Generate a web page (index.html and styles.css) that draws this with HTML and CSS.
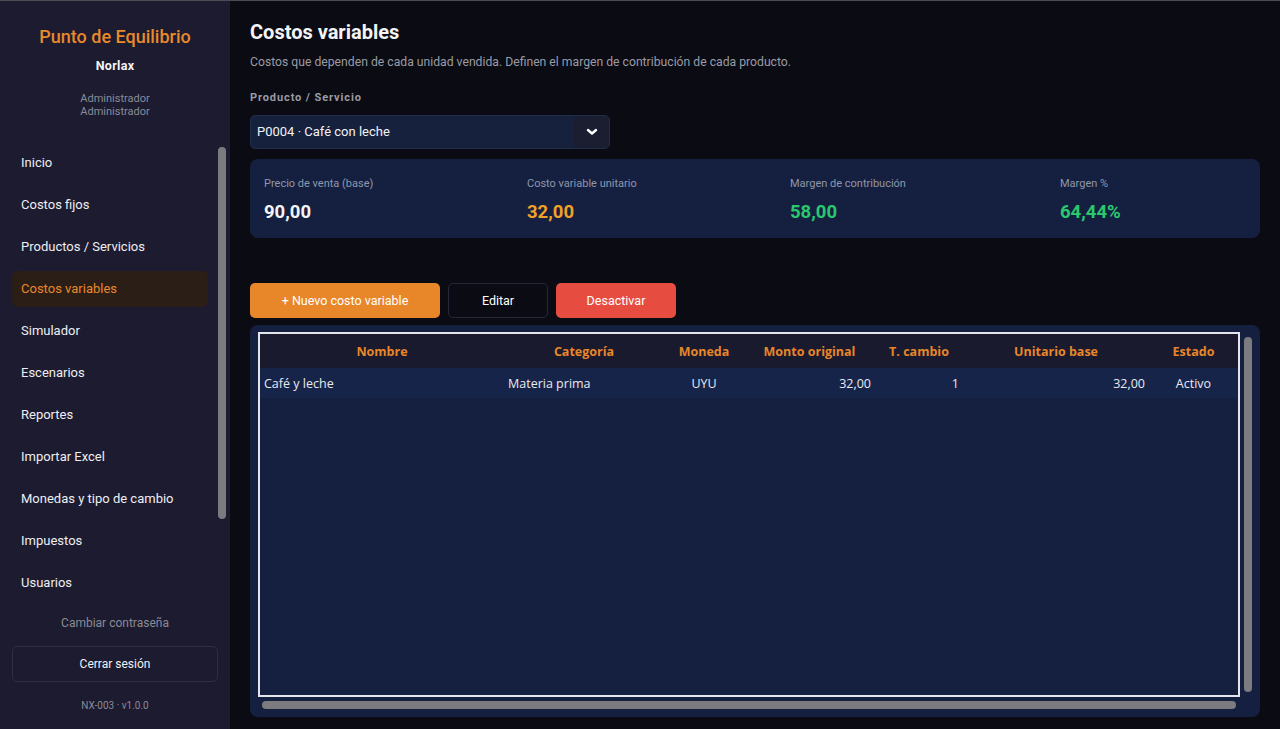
FILE: index.html
```html
<!DOCTYPE html>
<html lang="es">
<head>
  <meta charset="UTF-8">
  <meta name="viewport" content="width=device-width, initial-scale=1.0">
  <title>Costos variables</title>
  <link rel="stylesheet" href="styles.css">
</head>
<body>

<div class="app">
  <aside class="sidebar">
    <div class="brand">
      <div class="brand-title">Punto de Equilibrio</div>
      <div class="brand-company">Norlax</div>
      <div class="brand-user">Administrador<br>Administrador</div>
    </div>

    <div class="nav-wrap">
      <nav class="nav">
        <a class="nav-item">Inicio</a>
        <a class="nav-item">Costos fijos</a>
        <a class="nav-item">Productos / Servicios</a>
        <a class="nav-item active">Costos variables</a>
        <a class="nav-item">Simulador</a>
        <a class="nav-item">Escenarios</a>
        <a class="nav-item">Reportes</a>
        <a class="nav-item">Importar Excel</a>
        <a class="nav-item">Monedas y tipo de cambio</a>
        <a class="nav-item">Impuestos</a>
        <a class="nav-item">Usuarios</a>
      </nav>
      <div class="nav-scroll"></div>
    </div>

    <div class="side-link">Cambiar contraseña</div>
    <button class="logout">Cerrar sesión</button>
    <div class="version">NX-003 · v1.0.0</div>
  </aside>

  <main class="main">
    <h1 class="page-title">Costos variables</h1>
    <p class="page-sub">Costos que dependen de cada unidad vendida. Definen el margen de contribución de cada producto.</p>

    <div class="field-label">Producto / Servicio</div>
    <div class="select">
      <span class="select-value">P0004 · Café con leche</span>
      <span class="select-arrow">
        <svg width="12" height="8" viewBox="0 0 12 8"><path d="M2 2 L6 5.5 L10 2" fill="none" stroke="#fff" stroke-width="2.4" stroke-linecap="round" stroke-linejoin="round"/></svg>
      </span>
    </div>

    <div class="stats">
      <div class="stat">
        <div class="stat-label">Precio de venta (base)</div>
        <div class="stat-value">90,00</div>
      </div>
      <div class="stat">
        <div class="stat-label">Costo variable unitario</div>
        <div class="stat-value orange">32,00</div>
      </div>
      <div class="stat">
        <div class="stat-label">Margen de contribución</div>
        <div class="stat-value green">58,00</div>
      </div>
      <div class="stat">
        <div class="stat-label">Margen %</div>
        <div class="stat-value green">64,44%</div>
      </div>
    </div>

    <div class="actions">
      <button class="btn btn-primary">+ Nuevo costo variable</button>
      <button class="btn btn-ghost">Editar</button>
      <button class="btn btn-danger">Desactivar</button>
    </div>

    <div class="grid-panel">
      <div class="grid-box">
        <table class="grid">
          <colgroup>
            <col style="width:244px">
            <col style="width:160px">
            <col style="width:80px">
            <col style="width:131px">
            <col style="width:88px">
            <col style="width:186px">
            <col style="width:89px">
          </colgroup>
          <thead>
            <tr>
              <th>Nombre</th>
              <th>Categoría</th>
              <th>Moneda</th>
              <th>Monto original</th>
              <th>T. cambio</th>
              <th>Unitario base</th>
              <th>Estado</th>
            </tr>
          </thead>
          <tbody>
            <tr>
              <td>Café y leche</td>
              <td>Materia prima</td>
              <td class="center">UYU</td>
              <td class="right">32,00</td>
              <td class="right">1</td>
              <td class="right">32,00</td>
              <td class="center">Activo</td>
            </tr>
          </tbody>
        </table>
      </div>
      <div class="vscroll"></div>
      <div class="hscroll"></div>
    </div>
  </main>
</div>

</body>
</html>
```

FILE: styles.css
```css
* {
  box-sizing: border-box;
}

html, body {
  margin: 0;
  height: 100%;
}

body {
  font-family: Roboto, "Noto Sans", sans-serif;
  background-color: #0a0b13;
  color: #ececf0;
}

.app {
  display: flex;
  height: 729px;
  border-top: 1px solid #4a4b55;
}

/* sidebar */

.sidebar {
  width: 230px;
  flex-shrink: 0;
  background-color: #1c1b2f;
  padding: 0 4px 0 12px;
  display: flex;
  flex-direction: column;
}

.brand {
  text-align: center;
  padding-top: 26px;
  padding-right: 8px;
}

.brand-title {
  color: #e8892c;
  font-size: 18px;
  font-weight: 500;
  line-height: 20px;
}

.brand-company {
  margin-top: 11px;
  font-size: 12.5px;
  font-weight: 700;
  letter-spacing: 0.3px;
  line-height: 16px;
  color: #f4f4f6;
}

.brand-user {
  margin-top: 18px;
  font-size: 11px;
  line-height: 13px;
  color: #8a8b98;
}

.nav-wrap {
  display: flex;
  gap: 10px;
  margin-top: 27px;
}

.nav {
  width: 196px;
  display: flex;
  flex-direction: column;
  gap: 6px;
}

.nav-item {
  display: block;
  height: 36px;
  line-height: 36px;
  padding-left: 9px;
  font-size: 13px;
  color: #eeeef2;
  border-radius: 6px;
}

.nav-item.active {
  background-color: #2b1e16;
  color: #e8892c;
}

.nav-scroll {
  width: 8px;
  height: 372px;
  margin-top: 2px;
  background-color: #7b7b7f;
  border-radius: 4px;
}

.side-link {
  margin-top: 14px;
  padding-right: 8px;
  text-align: center;
  font-size: 12px;
  line-height: 16px;
  color: #8a8b98;
}

.logout {
  margin-top: 15px;
  width: 206px;
  height: 36px;
  background: transparent;
  border: 1px solid #2f2e44;
  border-radius: 5px;
  color: #f0f0f4;
  font-family: inherit;
  font-size: 12px;
}

.version {
  margin-top: 18px;
  padding-right: 8px;
  text-align: center;
  font-size: 10px;
  line-height: 12px;
  color: #8a8b98;
}

/* main */

.main {
  flex: 1;
  padding: 17px 20px 12px 20px;
  display: flex;
  flex-direction: column;
}

.page-title {
  margin: 0;
  font-size: 20px;
  font-weight: 700;
  line-height: 28px;
  color: #f4f4f6;
}

.page-sub {
  margin: 8px 0 0 0;
  font-size: 12.2px;
  line-height: 16px;
  color: #9a9ba6;
}

.field-label {
  margin-top: 21px;
  font-size: 11px;
  font-weight: 700;
  line-height: 14px;
  letter-spacing: 0.9px;
  color: #9a9ba6;
}

.select {
  margin-top: 10px;
  width: 360px;
  height: 34px;
  display: flex;
  background-color: #16213d;
  border: 1px solid #222b48;
  border-radius: 5px;
  overflow: hidden;
}

.select-value {
  flex: 1;
  padding-left: 6px;
  line-height: 32px;
  font-size: 13px;
  color: #f2f2f5;
}

.select-arrow {
  width: 35px;
  display: flex;
  align-items: center;
  justify-content: center;
  background-color: #1b1d31;
}

.stats {
  margin-top: 10px;
  height: 79px;
  display: grid;
  grid-template-columns: 263px 263px 270px 1fr;
  padding: 18px 14px 0 14px;
  background-color: #152040;
  border-radius: 8px;
}

.stat-label {
  font-size: 11px;
  line-height: 14px;
  color: #8f96ab;
}

.stat-value {
  margin-top: 9px;
  font-size: 18.5px;
  font-weight: 700;
  line-height: 24px;
  color: #f4f4f6;
}

.stat-value.orange {
  color: #f2a028;
}

.stat-value.green {
  color: #2ac86e;
}

.actions {
  margin-top: 45px;
  display: flex;
  gap: 8px;
}

.btn {
  height: 35px;
  border-radius: 5px;
  border: none;
  font-family: inherit;
  font-size: 12.5px;
  color: #fff;
}

.btn-primary {
  width: 190px;
  background-color: #e8862a;
}

.btn-ghost {
  width: 100px;
  background-color: #0a0b13;
  border: 1px solid #262838;
}

.btn-danger {
  width: 120px;
  background-color: #e74c40;
}

/* data grid */

.grid-panel {
  margin-top: 7px;
  flex: 1;
  display: grid;
  grid-template-columns: 1fr 8px;
  grid-template-rows: 1fr 8px;
  gap: 4px;
  padding: 7px 8px 8px 8px;
  background-color: #152040;
  border-radius: 8px;
}

.grid-box {
  border: 2px solid #e4e6ec;
  background-color: #152040;
  overflow: hidden;
}

.vscroll {
  margin: 5px 0;
  background-color: #7b7b80;
  border-radius: 4px;
}

.hscroll {
  margin: 0 4px;
  background-color: #7b7b80;
  border-radius: 4px;
}

.grid {
  width: 978px;
  table-layout: fixed;
  border-collapse: collapse;
  font-family: "Open Sans", "Noto Sans", sans-serif;
  font-size: 12.5px;
}

.grid th {
  height: 34px;
  padding: 0 4px;
  background-color: #191a2e;
  color: #e8862a;
  font-weight: 700;
  text-align: center;
}

.grid td {
  height: 30px;
  padding: 0 4px;
  background-color: #17244a;
  color: #e9eaef;
  text-align: left;
}

.grid td.center {
  text-align: center;
}

.grid td.right {
  text-align: right;
}
```
